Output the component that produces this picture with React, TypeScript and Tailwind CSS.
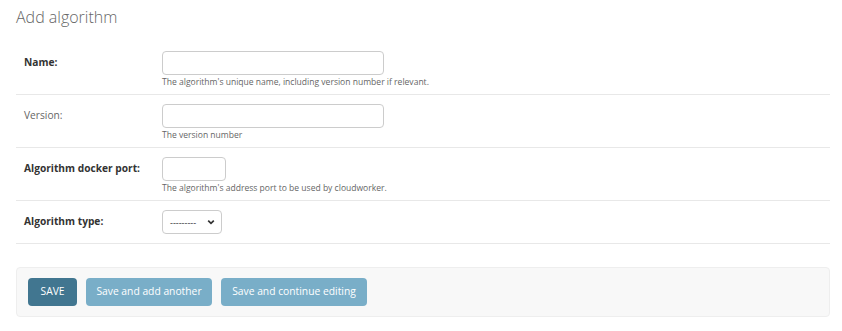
import type { ReactNode } from 'react';

const font = { fontFamily: '"Open Sans", "Noto Sans", sans-serif' };

function Row({
  label,
  required,
  children,
  help,
}: {
  label: string;
  required?: boolean;
  children: ReactNode;
  help?: string;
}) {
  return (
    <div className="flex px-2 pt-[9px] pb-[9px] border-b border-[#e8e8e8]">
      <div className="w-[138px] h-[24px] flex items-center">
        <label className={`text-[10.2px] ${required ? 'font-bold text-[#333]' : 'text-[#666]'}`}>{label}</label>
      </div>
      <div className="flex flex-col">
        {children}
        {help && (
          <div className="text-[8.55px] text-[#666] mt-[2px] mb-[-2px] leading-[10px]">{help}</div>
        )}
      </div>
    </div>
  );
}

export default function App() {
  return (
    <div className="w-[842px] h-[331px] bg-white" style={font}>
      <div className="px-4">
        <h1 className="text-[16px] font-light text-[#666] pt-[6px] h-[42px] leading-[22px]">Add algorithm</h1>

        <div className="w-[814px]">
          <Row label="Name:" required help="The algorithm's unique name, including version number if relevant.">
            <input className="w-[222px] h-[24px] border border-[#ccc] rounded-[4px] bg-white" />
          </Row>
          <Row label="Version:" help="The version number">
            <input className="w-[222px] h-[24px] border border-[#ccc] rounded-[4px] bg-white" />
          </Row>
          <Row label="Algorithm docker port:" required help="The algorithm's address port to be used by cloudworker.">
            <input className="w-[64px] h-[24px] border border-[#ccc] rounded-[4px] bg-white" />
          </Row>
          <Row label="Algorithm type:" required>
            <div className="w-[60px] h-[24px] border border-[#ccc] rounded-[4px] bg-white flex items-center justify-between pl-[7px] pr-[5px]">
              <span className="text-[9px] text-[#333] leading-none">---------</span>
              <svg width="10" height="10" viewBox="0 0 10 10">
                <path d="M2.2 3.6 L5 6.4 L7.8 3.6" fill="none" stroke="#333" strokeWidth="1.7" />
              </svg>
            </div>
          </Row>
        </div>

        <div className="mt-[23px] w-[814px] h-[50px] bg-[#f8f8f8] border border-[#eee] rounded-[4px] flex items-center gap-[9px] px-[11px]">
          <button className="h-[28px] w-[49px] bg-[#417690] text-white text-[10.3px] rounded-[4px]">SAVE</button>
          <button className="h-[28px] w-[126px] bg-[#79aec8] text-white text-[10.3px] rounded-[4px]">Save and add another</button>
          <button className="h-[28px] w-[146px] bg-[#79aec8] text-white text-[10.3px] rounded-[4px]">Save and continue editing</button>
        </div>
      </div>
    </div>
  );
}
